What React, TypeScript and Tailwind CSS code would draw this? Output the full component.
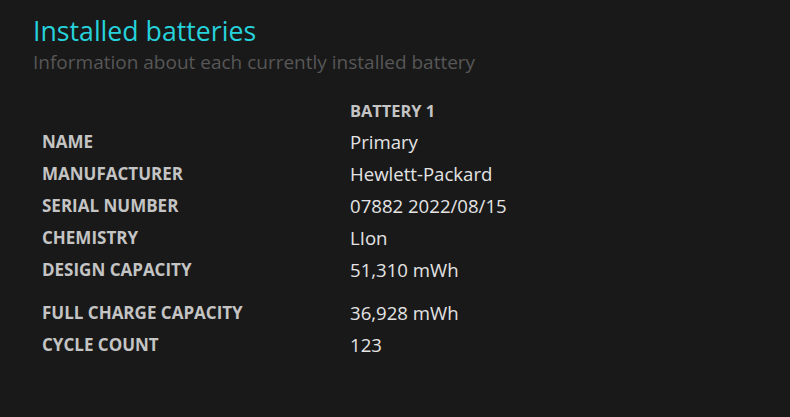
import React from "react";

const rows1 = [
  ["NAME", "Primary"],
  ["MANUFACTURER", "Hewlett-Packard"],
  ["SERIAL NUMBER", "07882 2022/08/15"],
  ["CHEMISTRY", "LIon"],
  ["DESIGN CAPACITY", "51,310 mWh"],
];
const rows2 = [
  ["FULL CHARGE CAPACITY", "36,928 mWh"],
  ["CYCLE COUNT", "123"],
];

function Row({ label, value }: { label: string; value: string }) {
  return (
    <div className="flex items-center h-[32px]">
      <div className="w-[317px] pl-[9px] text-[17px] font-bold text-[#c4c4c4]">{label}</div>
      <div className="text-[18.6px] text-[#e4e4e4]">{value}</div>
    </div>
  );
}

export default function App() {
  return (
    <div
      className="w-[790px] h-[417px] bg-[#191919] pl-[33px] pt-[13px]"
      style={{ fontFamily: '"Open Sans", "Noto Sans", sans-serif' }}
    >
      <div className="text-[26.7px] leading-[36px] text-[#26d2db]">Installed batteries</div>
      <div className="text-[19px] leading-[26px] text-[#575757]">Information about each currently installed battery</div>
      <div className="mt-[24px] pl-[317px] text-[16.4px] font-bold text-[#c4c4c4] leading-[24px]">BATTERY 1</div>
      <div className="mt-[3px]">
        {rows1.map(([l, v]) => (
          <Row key={l} label={l} value={v} />
        ))}
      </div>
      <div className="mt-[11px]">
        {rows2.map(([l, v]) => (
          <Row key={l} label={l} value={v} />
        ))}
      </div>
    </div>
  );
}
